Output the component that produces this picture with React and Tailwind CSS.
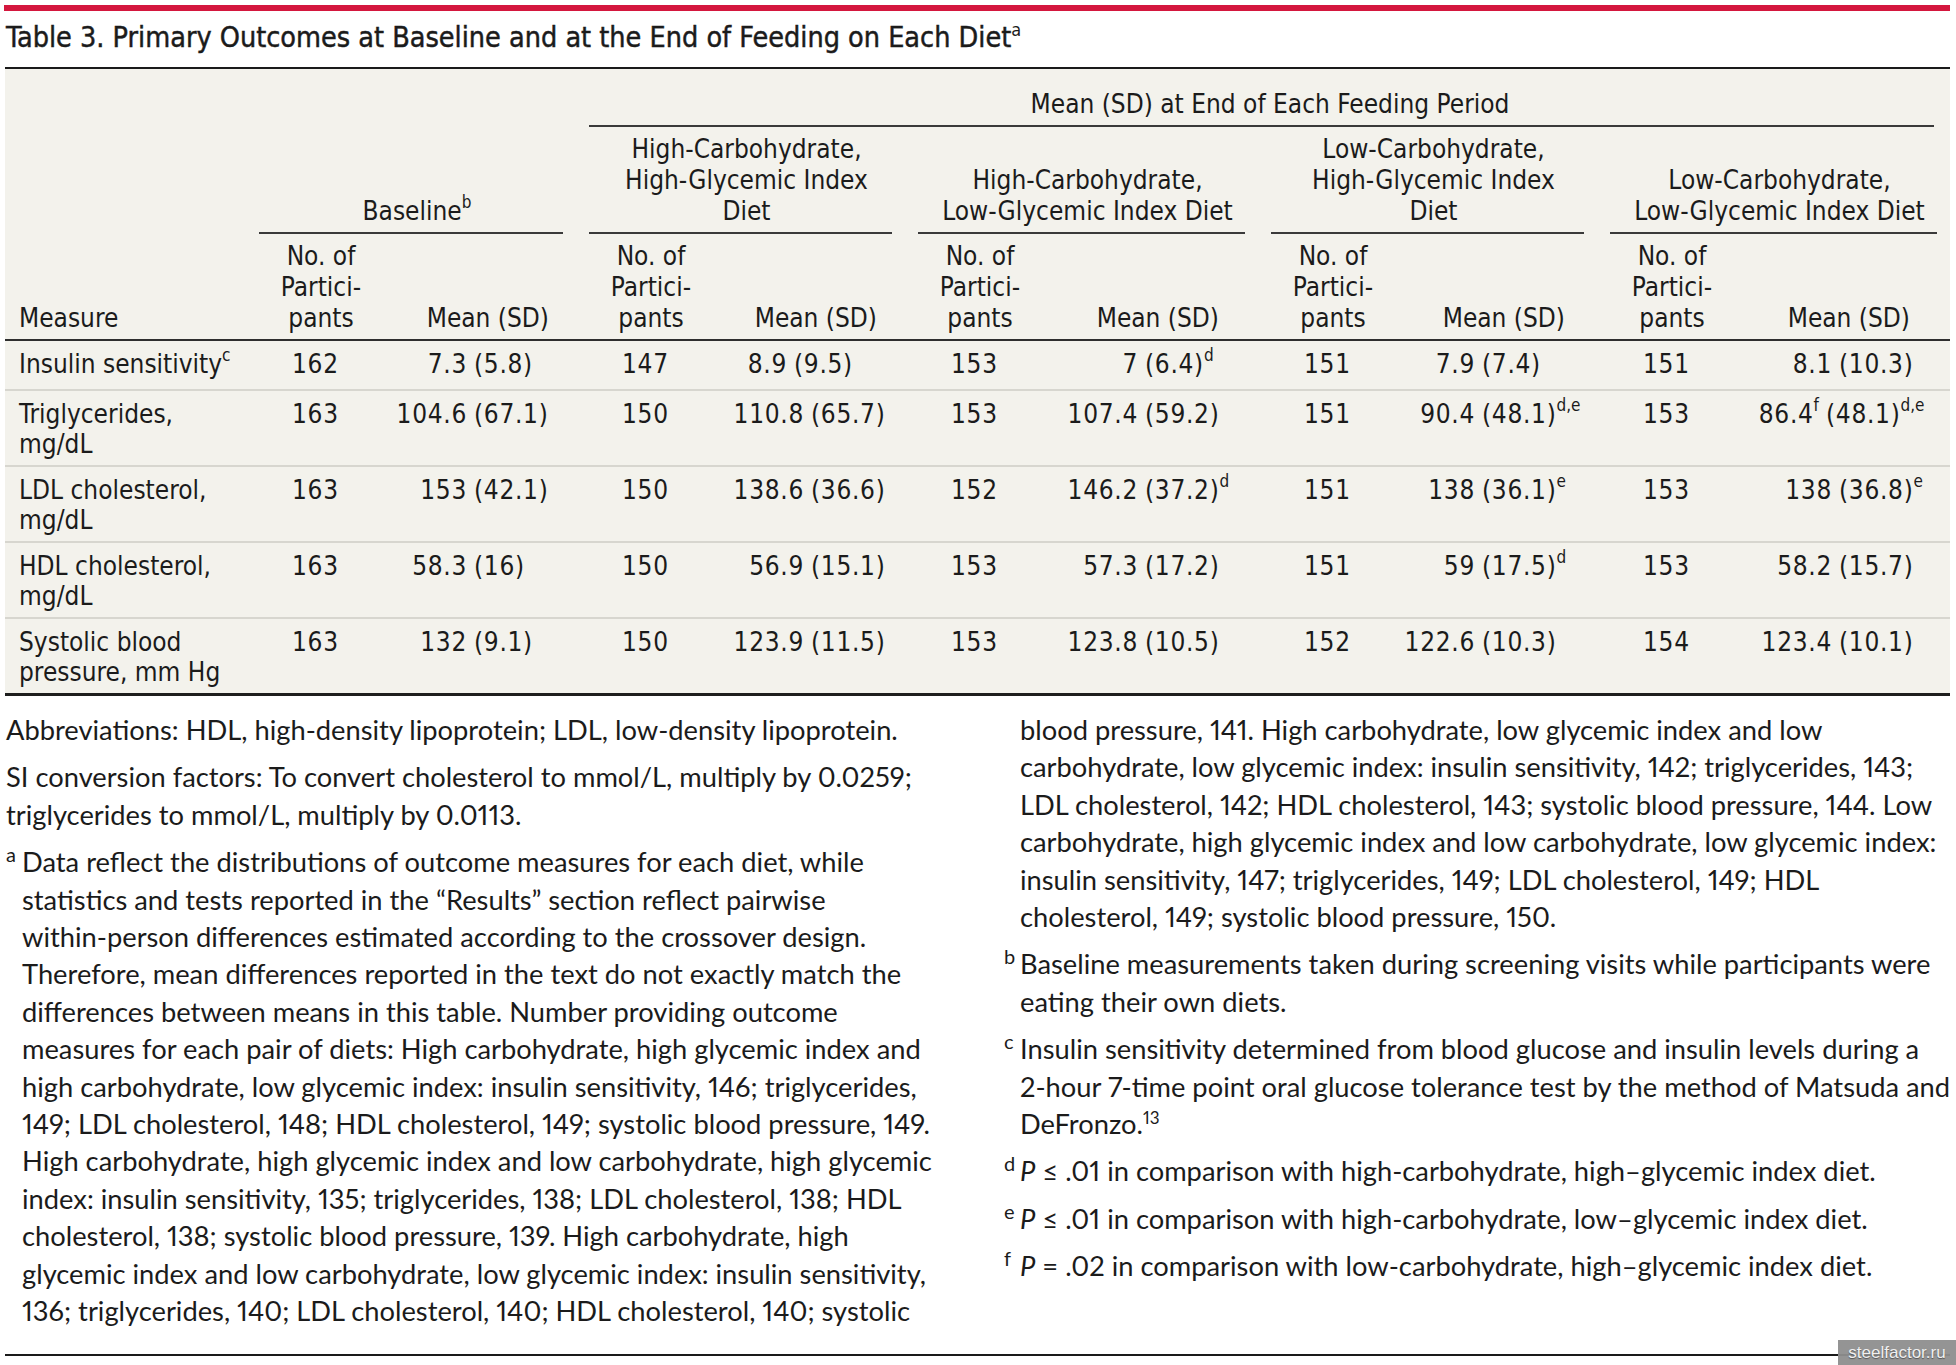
import React from "react";

const tableFont = "font-['DejaVu_Sans_Condensed','DejaVu_Sans',sans-serif] font-stretch-condensed";
const noteFont = "font-['Lato','Open_Sans',sans-serif] proportional-nums";

const groups = [
  { key: "base", w: "w-[330px]", meanW: "w-[78px]", hdrPr: "pr-[27px]" },
  { key: "hchg", w: "w-[329px]", meanW: "w-[85px]", hdrPr: "pr-[28px]", title: ["High-Carbohydrate,", "High-Glycemic Index", "Diet"] },
  { key: "hclg", w: "w-[353px]", meanW: "w-[90px]", hdrPr: "pr-[39px]", title: ["High-Carbohydrate,", "Low-Glycemic Index Diet"] },
  { key: "lchg", w: "w-[339px]", meanW: "w-[74px]", hdrPr: "pr-[32px]", title: ["Low-Carbohydrate,", "High-Glycemic Index", "Diet"] },
  { key: "lclg", w: "w-[353px]", meanW: "w-[92px]", hdrPr: "pr-[40px]", title: ["Low-Carbohydrate,", "Low-Glycemic Index Diet"] },
];

// mw overrides the mean box width where the reference sets a value off its column's "(" line
const rows = [
  {
    label: ["Insulin sensitivity"],
    sup: "c",
    cells: [
      { n: "162", m: "7.3", s: "(5.8)" },
      { n: "147", m: "8.9", s: "(9.5)", mw: "w-[68px]" },
      { n: "153", m: "7", s: "(6.4)", ss: "d" },
      { n: "151", m: "7.9", s: "(7.4)" },
      { n: "151", m: "8.1", s: "(10.3)" },
    ],
  },
  {
    label: ["Triglycerides,", "mg/dL"],
    cells: [
      { n: "163", m: "104.6", s: "(67.1)" },
      { n: "150", m: "110.8", s: "(65.7)" },
      { n: "153", m: "107.4", s: "(59.2)" },
      { n: "151", m: "90.4", s: "(48.1)", ss: "d,e" },
      { n: "153", m: "86.4", ms: "f", s: "(48.1)", ss: "d,e", mw: "w-[79px]" },
    ],
  },
  {
    label: ["LDL cholesterol,", "mg/dL"],
    cells: [
      { n: "163", m: "153", s: "(42.1)" },
      { n: "150", m: "138.6", s: "(36.6)" },
      { n: "152", m: "146.2", s: "(37.2)", ss: "d" },
      { n: "151", m: "138", s: "(36.1)", ss: "e" },
      { n: "153", m: "138", s: "(36.8)", ss: "e" },
    ],
  },
  {
    label: ["HDL cholesterol,", "mg/dL"],
    cells: [
      { n: "163", m: "58.3", s: "(16)" },
      { n: "150", m: "56.9", s: "(15.1)" },
      { n: "153", m: "57.3", s: "(17.2)" },
      { n: "151", m: "59", s: "(17.5)", ss: "d" },
      { n: "153", m: "58.2", s: "(15.7)" },
    ],
  },
  {
    label: ["Systolic blood", "pressure, mm Hg"],
    cells: [
      { n: "163", m: "132", s: "(9.1)" },
      { n: "150", m: "123.9", s: "(11.5)" },
      { n: "153", m: "123.8", s: "(10.5)" },
      { n: "152", m: "122.6", s: "(10.3)" },
      { n: "154", m: "123.4", s: "(10.1)" },
    ],
  },
];

function Sup({ children }) {
  return <sup className="text-[17px] top-[-0.7em] tracking-normal">{children}</sup>;
}

function Rule() {
  return <div className="mx-[13px] h-[2px] bg-[#3a3a3a]" />;
}

function SubHead({ g }) {
  return (
    <div className="flex items-end pt-[7px] pb-[5px]">
      <div className="w-[150px] shrink-0 text-center">
        No. of
        <br />
        Partici-
        <br />
        pants
      </div>
      <div className={`flex-1 text-right ${g.hdrPr}`}>Mean (SD)</div>
    </div>
  );
}

function Note({ mark, lines }) {
  return (
    <div className="flex">
      <div className="w-[16px] shrink-0">
        <sup className="text-[20px] top-[-0.5em]">{mark}</sup>
      </div>
      <div>
        {lines.map((l, i) => (
          <div key={i} className="whitespace-nowrap">
            {l}
          </div>
        ))}
      </div>
    </div>
  );
}

const noteA = [
  "Data reflect the distributions of outcome measures for each diet, while",
  "statistics and tests reported in the \u201cResults\u201d section reflect pairwise",
  "within-person differences estimated according to the crossover design.",
  "Therefore, mean differences reported in the text do not exactly match the",
  "differences between means in this table. Number providing outcome",
  "measures for each pair of diets: High carbohydrate, high glycemic index and",
  "high carbohydrate, low glycemic index: insulin sensitivity, 146; triglycerides,",
  "149; LDL cholesterol, 148; HDL cholesterol, 149; systolic blood pressure, 149.",
  "High carbohydrate, high glycemic index and low carbohydrate, high glycemic",
  "index: insulin sensitivity, 135; triglycerides, 138; LDL cholesterol, 138; HDL",
  "cholesterol, 138; systolic blood pressure, 139. High carbohydrate, high",
  "glycemic index and low carbohydrate, low glycemic index: insulin sensitivity,",
  "136; triglycerides, 140; LDL cholesterol, 140; HDL cholesterol, 140; systolic",
];

const noteACont = [
  "blood pressure, 141. High carbohydrate, low glycemic index and low",
  "carbohydrate, low glycemic index: insulin sensitivity, 142; triglycerides, 143;",
  "LDL cholesterol, 142; HDL cholesterol, 143; systolic blood pressure, 144. Low",
  "carbohydrate, high glycemic index and low carbohydrate, low glycemic index:",
  "insulin sensitivity, 147; triglycerides, 149; LDL cholesterol, 149; HDL",
  "cholesterol, 149; systolic blood pressure, 150.",
];

export default function App() {
  return (
    <div className="relative w-[1956px] h-[1365px] overflow-hidden bg-white text-[#1b1b1b]">
      <div className="w-[1950px] pl-[5px]">
        {/* Red rule */}
        <div className="mt-[5px] -ml-[1px] h-[6px] bg-[#d4173e]" />

        {/* Title */}
        <div
          className={`${tableFont} mt-[9px] pl-[1px] text-[28.5px] leading-[35px] whitespace-nowrap [-webkit-text-stroke:0.45px]`}
        >
          Table 3. Primary Outcomes at Baseline and at the End of Feeding on Each Diet
          <sup className="text-[18px] top-[-0.6em] [-webkit-text-stroke:0px]">a</sup>
        </div>

        {/* Table */}
        <div className={`${tableFont} mt-[12px] border-t-2 border-[#1a1a1a] bg-[#f3f2ec] text-[26px]`}>
          {/* Header */}
          <div className="flex border-b-2 border-[#2e2e2e] leading-[31px]">
            <div className="w-[241px] shrink-0 flex flex-col justify-end pl-[14px] pb-[5px]">Measure</div>
            <div className="w-[330px] shrink-0 flex flex-col justify-end">
              <div className="pb-[5px] pl-[12px] text-center">
                Baseline<Sup>b</Sup>
              </div>
              <Rule />
              <SubHead g={groups[0]} />
            </div>
            <div className="w-[1374px] shrink-0 flex flex-col">
              <div className="pt-[20px] pb-[5px] pl-[14px] text-center">Mean (SD) at End of Each Feeding Period</div>
              <div className="ml-[13px] mr-[16px] h-[2px] bg-[#3a3a3a]" />
              <div className="flex">
                {groups.slice(1).map((g) => (
                  <div key={g.key} className={`${g.w} shrink-0 flex flex-col`}>
                    <div className="flex-1 flex flex-col justify-end pt-[7px] pb-[5px] pl-[12px] text-center">
                      {g.title.map((t, i) => (
                        <div key={i}>{t}</div>
                      ))}
                    </div>
                    <Rule />
                    <SubHead g={g} />
                  </div>
                ))}
              </div>
            </div>
          </div>

          {/* Body */}
          {rows.map((r, ri) => {
            const last = ri === rows.length - 1;
            return (
              <div
                key={ri}
                className={`flex leading-[30px] pt-[8px] pb-[6px] ${
                  last ? "border-b-[3px] border-[#1e1e1e]" : "border-b-2 border-[#d7d6cf]"
                } ${ri === 0 ? "min-h-[50px]" : ""}`}
              >
                <div className="w-[241px] shrink-0 pl-[14px]">
                  {r.label.map((l, i) => (
                    <div key={i} className="whitespace-nowrap">
                      {l}
                      {r.sup && i === r.label.length - 1 ? <Sup>{r.sup}</Sup> : null}
                    </div>
                  ))}
                </div>
                {r.cells.map((c, ci) => {
                  const g = groups[ci];
                  return (
                    <div key={ci} className={`${g.w} shrink-0 flex tracking-[0.7px]`}>
                      <div className="w-[150px] shrink-0 pl-[46px]">{c.n}</div>
                      <div className={`${c.mw || g.meanW} shrink-0 flex justify-end pr-[7px] whitespace-nowrap`}>
                        <span>
                          {c.m}
                          {c.ms ? <Sup>{c.ms}</Sup> : null}
                        </span>
                      </div>
                      <div className="flex-1 whitespace-nowrap">
                        {c.s}
                        {c.ss ? <Sup>{c.ss}</Sup> : null}
                      </div>
                    </div>
                  );
                })}
              </div>
            );
          })}
        </div>

        {/* Footnotes */}
        <div className={`${noteFont} flex border-b-2 border-[#1a1a1a] pt-[15px] pb-[24px] text-[27.3px] leading-[37.4px]`}>
          <div className="w-[999px] shrink-0 pl-[1px] flex flex-col gap-[10px]">
            <div className="whitespace-nowrap">Abbreviations: HDL, high-density lipoprotein; LDL, low-density lipoprotein.</div>
            <div className="whitespace-nowrap">
              <div>SI conversion factors: To convert cholesterol to mmol/L, multiply by 0.0259;</div>
              <div>triglycerides to mmol/L, multiply by 0.0113.</div>
            </div>
            <Note mark="a" lines={noteA} />
          </div>
          <div className="flex-1 flex flex-col gap-[10px]">
            <div className="pl-[16px]">
              {noteACont.map((l, i) => (
                <div key={i} className="whitespace-nowrap">
                  {l}
                </div>
              ))}
            </div>
            <Note
              mark="b"
              lines={["Baseline measurements taken during screening visits while participants were", "eating their own diets."]}
            />
            <Note
              mark="c"
              lines={[
                "Insulin sensitivity determined from blood glucose and insulin levels during a",
                "2-hour 7-time point oral glucose tolerance test by the method of Matsuda and",
                <>
                  DeFronzo.<sup className="text-[17px] top-[-0.6em]">13</sup>
                </>,
              ]}
            />
            <Note
              mark="d"
              lines={[
                <>
                  <i>P</i> {"\u2264"} .01 in comparison with high-carbohydrate, high{"\u2013"}glycemic index diet.
                </>,
              ]}
            />
            <Note
              mark="e"
              lines={[
                <>
                  <i>P</i> {"\u2264"} .01 in comparison with high-carbohydrate, low{"\u2013"}glycemic index diet.
                </>,
              ]}
            />
            <Note
              mark="f"
              lines={[
                <>
                  <i>P</i> = .02 in comparison with low-carbohydrate, high{"\u2013"}glycemic index diet.
                </>,
              ]}
            />
          </div>
        </div>
      </div>

      {/* Watermark */}
      <div className="absolute right-0 bottom-0 w-[118px] h-[25px] bg-[#8e8e8e]/95 text-center font-['Liberation_Sans',sans-serif] text-[17px] leading-[25px] text-[#f0f0f0] [text-shadow:0_1px_1px_rgba(0,0,0,0.45)]">
        steelfactor.ru
      </div>
    </div>
  );
}
